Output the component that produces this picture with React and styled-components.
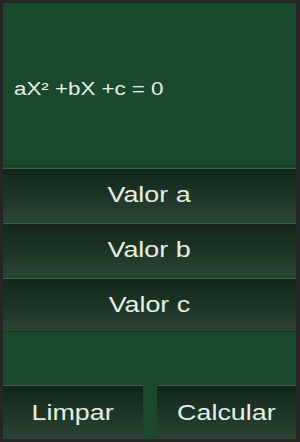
import React from "react";
import styled, { createGlobalStyle } from "styled-components";

const GlobalStyle = createGlobalStyle`
  html, body {
    margin: 0;
    padding: 0;
    background: #262626;
  }
  * { box-sizing: border-box; }
`;

export default function App() {
  const values = ["Valor a", "Valor b", "Valor c"];

  return (
    <>
      <GlobalStyle />
      <Frame>
        <Screen>
          <Display>
            <Equation>aX² +bX +c = 0</Equation>
          </Display>
          {values.map((v) => (
            <InputButton key={v}>
              <Label>{v}</Label>
            </InputButton>
          ))}
          <Spacer />
          <BottomRow>
            <ActionButton>
              <Label>Limpar</Label>
            </ActionButton>
            <ActionButton>
              <Label>Calcular</Label>
            </ActionButton>
          </BottomRow>
        </Screen>
      </Frame>
    </>
  );
}

const Frame = styled.div`
  width: 300px;
  height: 442px;
  padding: 3px 4px 3px 3px;
  background: #262626;
`;

const Screen = styled.div`
  height: 100%;
  background: #1a4a2c;
  display: flex;
  flex-direction: column;
  font-family: "Liberation Sans", Arial, sans-serif;
  color: #e6efe6;
`;

const Display = styled.div`
  height: 163px;
  display: flex;
  align-items: center;
  padding: 10px 0 0 11px;
  border-bottom: 1px solid #143a22;
`;

const Equation = styled.div`
  font-size: 18px;
  transform: scaleX(1.24);
  transform-origin: left center;
`;

const ButtonBase = styled.div`
  display: flex;
  align-items: center;
  justify-content: center;
  height: 53px;
  background: linear-gradient(#13251a 0%, #1d3526 50%, #2b4434 100%);
  border-top: 1px solid #41604b;
`;

const Label = styled.span`
  display: inline-block;
  font-size: 22px;
  transform: scaleX(1.22);
`;

const InputButton = styled(ButtonBase)`
  margin-top: 2px;
`;

const Spacer = styled.div`
  height: 53px;
  border-top: 1px solid #153a23;
`;

const BottomRow = styled.div`
  display: grid;
  grid-template-columns: 140px 139px;
  justify-content: space-between;
  margin-top: 1px;
`;

const ActionButton = styled(ButtonBase)`
  height: 54px;
`;
